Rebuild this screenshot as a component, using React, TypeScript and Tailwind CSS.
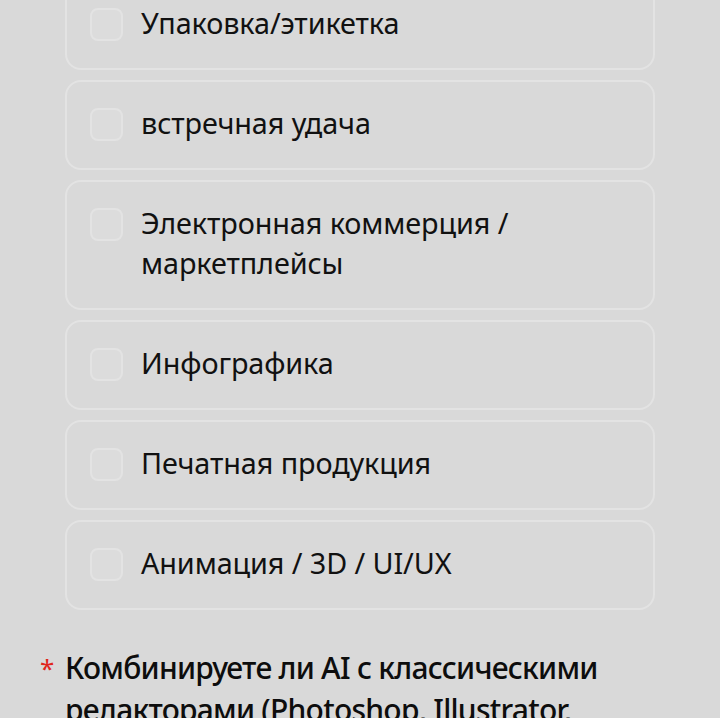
import React from "react";

const options: string[][] = [
  ["Упаковка/этикетка"],
  ["встречная удача"],
  ["Электронная коммерция /", "маркетплейсы"],
  ["Инфографика"],
  ["Печатная продукция"],
  ["Анимация / 3D / UI/UX"],
];

export default function App() {
  return (
    <div
      className="w-[720px] h-[718px] overflow-hidden bg-[#d9d9d9] text-[#111111]"
      style={{ fontFamily: '"Noto Sans", "Open Sans", sans-serif' }}
    >
      <div className="-mt-[20px] pl-[65px] pr-[65px] flex flex-col gap-[10px]">
        {options.map((lines, i) => (
          <div
            key={i}
            className="rounded-[16px] border-2 border-[#e3e3e3] px-[23px] pt-[21px] pb-[25px] flex items-start gap-[18px]"
          >
            <div className="mt-[5px] w-[33px] h-[33px] shrink-0 rounded-[8px] border-2 border-[#e3e3e3] bg-[#dcdcdc]" />
            <div className="text-[28.8px] leading-[40px] tracking-[-0.1px]">
              {lines.map((l, j) => (
                <div key={j}>{l}</div>
              ))}
            </div>
          </div>
        ))}
      </div>
      <div className="mt-[37px] pl-[40px] pr-[40px] flex items-start">
        <span className="w-[25px] shrink-0 text-[#e0261b] text-[26px] leading-[42px]">*</span>
        <div className="text-[30px] leading-[42px] font-medium tracking-[-0.75px] text-[#0d0d0d]">
          Комбинируете ли AI с классическими редакторами (Photoshop, Illustrator, Figma)?
        </div>
      </div>
    </div>
  );
}
